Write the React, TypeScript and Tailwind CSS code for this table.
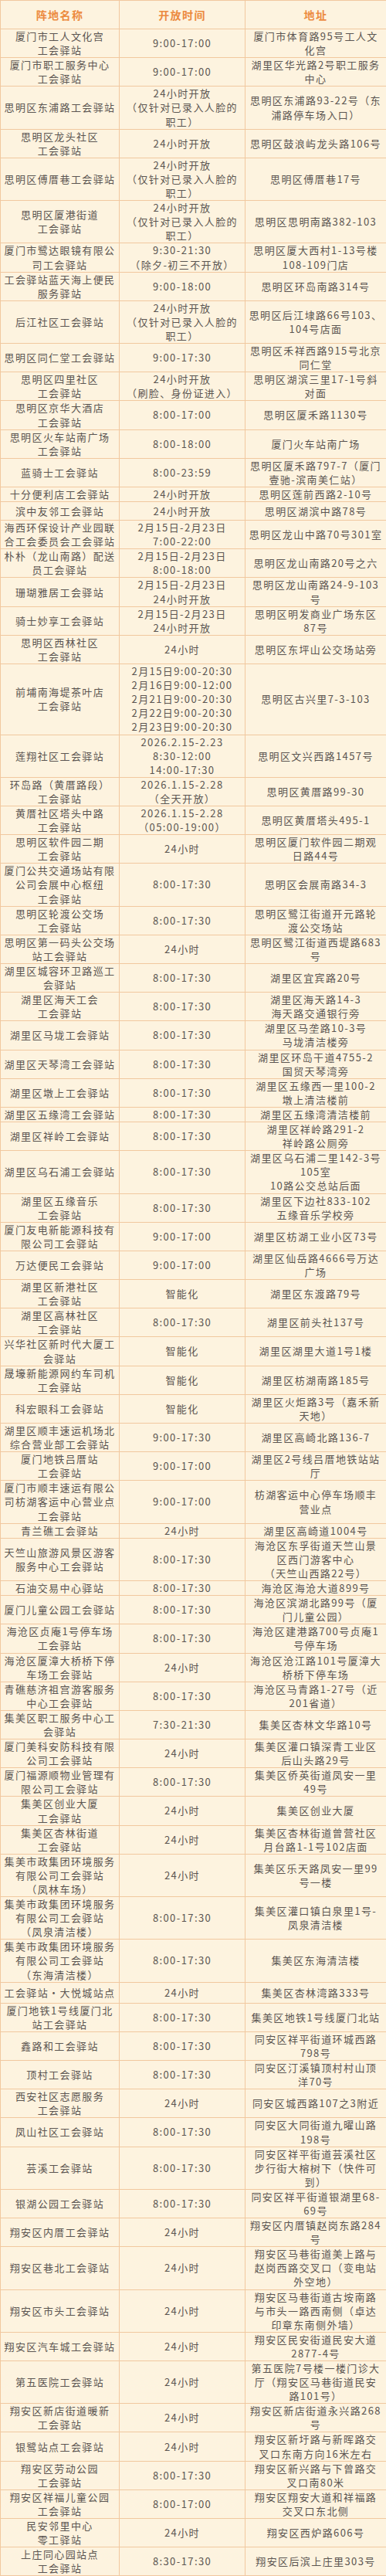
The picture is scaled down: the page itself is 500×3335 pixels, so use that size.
type Row = { name: string[]; time: string[]; addr: string[]; h?: string };

const rows: Row[] = [
  { name: ["厦门市工人文化宫", "工会驿站"], time: ["9:00-17:00"], addr: ["厦门市体育路95号工人文", "化宫"] },
  { name: ["厦门市职工服务中心", "工会驿站"], time: ["9:00-17:00"], addr: ["湖里区华光路2号职工服务", "中心"] },
  { name: ["思明区东浦路工会驿站"], time: ["24小时开放", "（仅针对已录入人脸的", "职工）"], addr: ["思明区东浦路93-22号（东", "浦路停车场入口）"] },
  { name: ["思明区龙头社区", "工会驿站"], time: ["24小时开放"], addr: ["思明区鼓浪屿龙头路106号"] },
  { name: ["思明区傅厝巷工会驿站"], time: ["24小时开放", "（仅针对已录入人脸的", "职工）"], addr: ["思明区傅厝巷17号"] },
  { name: ["思明区厦港街道", "工会驿站"], time: ["24小时开放", "（仅针对已录入人脸的", "职工）"], addr: ["思明区思明南路382-103"] },
  { name: ["厦门市鹭达眼镜有限公", "司工会驿站"], time: ["9:30-21:30", "（除夕-初三不开放）"], addr: ["思明区厦大西村1-13号楼", "108-109门店"] },
  { name: ["工会驿站蓝天海上便民", "服务驿站"], time: ["9:00-18:00"], addr: ["思明区环岛南路314号"] },
  { name: ["后江社区工会驿站"], time: ["24小时开放", "（仅针对已录入人脸的", "职工）"], addr: ["思明区后江埭路66号103、", "104号店面"] },
  { name: ["思明区同仁堂工会驿站"], time: ["9:00-17:30"], addr: ["思明区禾祥西路915号北京", "同仁堂"] },
  { name: ["思明区四里社区", "工会驿站"], time: ["24小时开放", "（刷脸、身份证进入）"], addr: ["思明区湖滨三里17-1号斜", "对面"] },
  { name: ["思明区京华大酒店", "工会驿站"], time: ["8:00-17:00"], addr: ["思明区厦禾路1130号"] },
  { name: ["思明区火车站南广场", "工会驿站"], time: ["8:00-18:00"], addr: ["厦门火车站南广场"] },
  { name: ["蓝骑士工会驿站"], time: ["8:00-23:59"], addr: ["思明区厦禾路797-7（厦门", "壹驰-滨南美仁站）"] },
  { name: ["十分便利店工会驿站"], time: ["24小时开放"], addr: ["思明区莲前西路2-10号"] },
  { name: ["滨中友邻工会驿站"], time: ["24小时开放"], addr: ["思明区湖滨中路78号"], h: "h-[24px]" },
  { name: ["海西环保设计产业园联", "合工会委员会工会驿站"], time: ["2月15日-2月23日", "7:00-22:00"], addr: ["思明区龙山中路70号301室"] },
  { name: ["朴朴（龙山南路）配送", "员工会驿站"], time: ["2月15日-2月23日", "8:00-18:00"], addr: ["思明区龙山南路20号之六"] },
  { name: ["珊瑚雅居工会驿站"], time: ["2月15日-2月23日", "24小时开放"], addr: ["思明区龙山南路24-9-103", "号"] },
  { name: ["骑士妙享工会驿站"], time: ["2月15日-2月23日", "24小时开放"], addr: ["思明区明发商业广场东区", "87号"] },
  { name: ["思明区西林社区", "工会驿站"], time: ["24小时"], addr: ["思明区东坪山公交场站旁"] },
  {
    name: ["前埔南海堤茶叶店", "工会驿站"],
    time: ["2月15日9:00-20:30", "2月16日9:00-12:00", "2月21日9:00-20:30", "2月22日9:00-20:30", "2月23日9:00-20:30"],
    addr: ["思明区古兴里7-3-103"],
  },
  { name: ["莲翔社区工会驿站"], time: ["2026.2.15-2.23", "8:30-12:00", "14:00-17:30"], addr: ["思明区文兴西路1457号"] },
  { name: ["环岛路（黄厝路段）", "工会驿站"], time: ["2026.1.15-2.28", "（全天开放）"], addr: ["思明区黄厝路99-30"] },
  { name: ["黄厝社区塔头中路", "工会驿站"], time: ["2026.1.15-2.28", "（05:00-19:00）"], addr: ["思明区黄厝塔头495-1"] },
  { name: ["思明区软件园二期", "工会驿站"], time: ["24小时"], addr: ["思明区厦门软件园二期观", "日路44号"] },
  { name: ["厦门公共交通场站有限", "公司会展中心枢纽", "工会驿站"], time: ["8:00-17:30"], addr: ["思明区会展南路34-3"] },
  { name: ["思明区轮渡公交场", "工会驿站"], time: ["8:00-17:30"], addr: ["思明区鹭江街道开元路轮", "渡公交场站"] },
  { name: ["思明区第一码头公交场", "站工会驿站"], time: ["24小时"], addr: ["思明区鹭江街道西堤路683", "号"] },
  { name: ["湖里区城容环卫路巡工", "会驿站"], time: ["8:00-17:30"], addr: ["湖里区宜宾路20号"] },
  { name: ["湖里区海天工会", "工会驿站"], time: ["8:00-17:30"], addr: ["湖里区海天路14-3", "海天路交通银行旁"] },
  { name: ["湖里区马垅工会驿站"], time: ["8:00-17:30"], addr: ["湖里区马垄路10-3号", "马垅清洁楼旁"] },
  { name: ["湖里区天琴湾工会驿站"], time: ["8:00-17:30"], addr: ["湖里区环岛干道4755-2", "国贸天琴湾旁"] },
  { name: ["湖里区墩上工会驿站"], time: ["8:00-17:30"], addr: ["湖里区五缘西一里100-2", "墩上清洁楼前"] },
  { name: ["湖里区五缘湾工会驿站"], time: ["8:00-17:30"], addr: ["湖里区五缘湾清洁楼前"] },
  { name: ["湖里区祥岭工会驿站"], time: ["8:00-17:30"], addr: ["湖里区祥岭路291-2", "祥岭路公厕旁"] },
  { name: ["湖里区乌石浦工会驿站"], time: ["8:00-17:30"], addr: ["湖里区乌石浦二里142-3号", "105室", "10路公交总站后面"] },
  { name: ["湖里区五缘音乐", "工会驿站"], time: ["8:00-17:30"], addr: ["湖里区下边社833-102", "五缘音乐学校旁"] },
  { name: ["厦门友电新能源科技有", "限公司工会驿站"], time: ["9:00-17:00"], addr: ["湖里区枋湖工业小区73号"] },
  { name: ["万达便民工会驿站"], time: ["9:00-17:00"], addr: ["湖里区仙岳路4666号万达", "广场"] },
  { name: ["湖里区新港社区", "工会驿站"], time: ["智能化"], addr: ["湖里区东渡路79号"] },
  { name: ["湖里区高林社区", "工会驿站"], time: ["8:00-17:30"], addr: ["湖里区前头社137号"] },
  { name: ["兴华社区新时代大厦工", "会驿站"], time: ["智能化"], addr: ["湖里区湖里大道1号1楼"] },
  { name: ["晟壕新能源网约车司机", "工会驿站"], time: ["智能化"], addr: ["湖里区枋湖南路185号"] },
  { name: ["科宏眼科工会驿站"], time: ["智能化"], addr: ["湖里区火炬路3号（嘉禾新", "天地）"] },
  { name: ["湖里区顺丰速运机场北", "综合营业部工会驿站"], time: ["9:00-17:30"], addr: ["湖里区高崎北路136-7"] },
  { name: ["厦门地铁吕厝站", "工会驿站"], time: ["9:00-17:00"], addr: ["湖里区2号线吕厝地铁站站", "厅"] },
  { name: ["厦门市顺丰速运有限公", "司枋湖客运中心营业点", "工会驿站"], time: ["9:00-17:00"], addr: ["枋湖客运中心停车场顺丰", "营业点"] },
  { name: ["青兰礁工会驿站"], time: ["24小时"], addr: ["湖里区高崎道1004号"] },
  { name: ["天竺山旅游风景区游客", "服务中心工会驿站"], time: ["8:00-17:30"], addr: ["海沧区东孚街道天竺山景", "区西门游客中心", "（天竺山西路22号）"] },
  { name: ["石油交易中心驿站"], time: ["8:00-17:30"], addr: ["海沧区海沧大道899号"] },
  { name: ["厦门儿童公园工会驿站"], time: ["8:00-17:30"], addr: ["海沧区滨湖北路99号（厦", "门儿童公园）"] },
  { name: ["海沧区贞庵1号停车场", "工会驿站"], time: ["8:00-17:30"], addr: ["海沧区建港路700号贞庵1", "号停车场"] },
  { name: ["海沧区厦漳大桥桥下停", "车场工会驿站"], time: ["24小时"], addr: ["海沧区沧江路101号厦漳大", "桥桥下停车场"] },
  { name: ["青礁慈济祖宫游客服务", "中心工会驿站"], time: ["8:00-17:30"], addr: ["海沧区马青路1-27号（近", "201省道）"] },
  { name: ["集美区职工服务中心工", "会驿站"], time: ["7:30-21:30"], addr: ["集美区杏林文华路10号"] },
  { name: ["厦门美科安防科技有限", "公司工会驿站"], time: ["24小时"], addr: ["集美区灌口镇深青工业区", "后山头路29号"] },
  { name: ["厦门福源顺物业管理有", "限公司工会驿站"], time: ["8:00-17:30"], addr: ["集美区侨英街道凤安一里", "49号"] },
  { name: ["集美区创业大厦", "工会驿站"], time: ["24小时"], addr: ["集美区创业大厦"] },
  { name: ["集美区杏林街道", "工会驿站"], time: ["24小时"], addr: ["集美区杏林街道曾营社区", "月台路1-1号102店面"] },
  { name: ["集美市政集团环境服务", "有限公司工会驿站", "（凤林车场）"], time: ["24小时"], addr: ["集美区乐天路凤安一里99", "号一楼"] },
  { name: ["集美市政集团环境服务", "有限公司工会驿站", "（凤泉清洁楼）"], time: ["8:00-17:30"], addr: ["集美区灌口镇白泉里1号-", "凤泉清洁楼"] },
  { name: ["集美市政集团环境服务", "有限公司工会驿站", "（东海清洁楼）"], time: ["8:00-17:30"], addr: ["集美区东海清洁楼"] },
  { name: ["工会驿站•大悦城站点"], time: ["24小时"], addr: ["集美区杏林湾路333号"], h: "h-[27px]" },
  { name: ["厦门地铁1号线厦门北", "站工会驿站"], time: ["8:00-17:30"], addr: ["集美区地铁1号线厦门北站"] },
  { name: ["鑫路和工会驿站"], time: ["8:00-17:30"], addr: ["同安区祥平街道环城西路", "798号"] },
  { name: ["顶村工会驿站"], time: ["8:00-17:30"], addr: ["同安区汀溪镇顶村村山顶", "洋70号"] },
  { name: ["西安社区志愿服务", "工会驿站"], time: ["24小时"], addr: ["同安区城西路107之3附近"] },
  { name: ["凤山社区工会驿站"], time: ["8:00-17:30"], addr: ["同安区大同街道九曜山路", "198号"] },
  { name: ["芸溪工会驿站"], time: ["8:00-17:30"], addr: ["同安区祥平街道芸溪社区", "步行街大榕树下（快件可", "到）"] },
  { name: ["银湖公园工会驿站"], time: ["8:00-17:30"], addr: ["同安区祥平街道银湖里68-", "69号"] },
  { name: ["翔安区内厝工会驿站"], time: ["24小时"], addr: ["翔安区内厝镇赵岗东路284", "号"] },
  { name: ["翔安区巷北工会驿站"], time: ["24小时"], addr: ["翔安区马巷街道美上路与", "赵岗西路交叉口（变电站", "外空地）"] },
  { name: ["翔安区市头工会驿站"], time: ["24小时"], addr: ["翔安区马巷街道古垵南路", "与市头一路西南侧（卓达", "印章东南侧外墙）"] },
  { name: ["翔安区汽车城工会驿站"], time: ["24小时"], addr: ["翔安区民安街道民安大道", "2877-4号"] },
  { name: ["第五医院工会驿站"], time: ["24小时"], addr: ["第五医院7号楼一楼门诊大", "厅（翔安区马巷街道民安", "路101号）"] },
  { name: ["翔安区新店街道暖新", "工会驿站"], time: ["24小时"], addr: ["翔安区新店街道永兴路268", "号"] },
  { name: ["银鹭站点工会驿站"], time: ["24小时"], addr: ["翔安区新圩路与新晖路交", "叉口东南方向16米左右"] },
  { name: ["翔安区劳动公园", "工会驿站"], time: ["8:00-17:30"], addr: ["翔安区新兴路与下曾路交", "叉口南80米"] },
  { name: ["翔安区祥福儿童公园", "工会驿站"], time: ["8:00-17:00"], addr: ["翔安区翔安大道和祥福路", "交叉口东北侧"] },
  { name: ["民安邻里中心", "零工驿站"], time: ["24小时"], addr: ["翔安区西炉路606号"] },
  { name: ["上庄同心园站点", "工会驿站"], time: ["8:30-17:30"], addr: ["翔安区后滨上庄里303号"] },
];

const Cell = ({ lines }: { lines: string[] }) => (
  <td className="border border-[#f1c89f] p-0 text-center align-middle whitespace-nowrap">
    {lines.map((l, i) => (
      <div key={i}>{l}</div>
    ))}
  </td>
);

export default function App() {
  return (
    <div className="w-[500px] bg-[#fdf3df] font-['Noto_Sans_CJK_SC','Noto_Sans',sans-serif] text-[13px] leading-[18.1px] tracking-[1.4px] text-[#5b5551]">
      <table className="w-full table-fixed border-collapse border border-[#f1c89f]">
        <colgroup>
          <col className="w-[154px]" />
          <col className="w-[163px]" />
          <col className="w-[183px]" />
        </colgroup>
        <thead>
          <tr className="h-[37px] text-[14px] font-bold text-[#ec8a3e]">
            <th className="border border-[#f1c89f] p-0 text-center align-middle">阵地名称</th>
            <th className="border border-[#f1c89f] p-0 text-center align-middle">开放时间</th>
            <th className="border border-[#f1c89f] p-0 text-center align-middle">地址</th>
          </tr>
        </thead>
        <tbody>
          {rows.map((r, i) => (
            <tr key={i} className={r.h}>
              <Cell lines={r.name} />
              <Cell lines={r.time} />
              <Cell lines={r.addr} />
            </tr>
          ))}
        </tbody>
      </table>
    </div>
  );
}
